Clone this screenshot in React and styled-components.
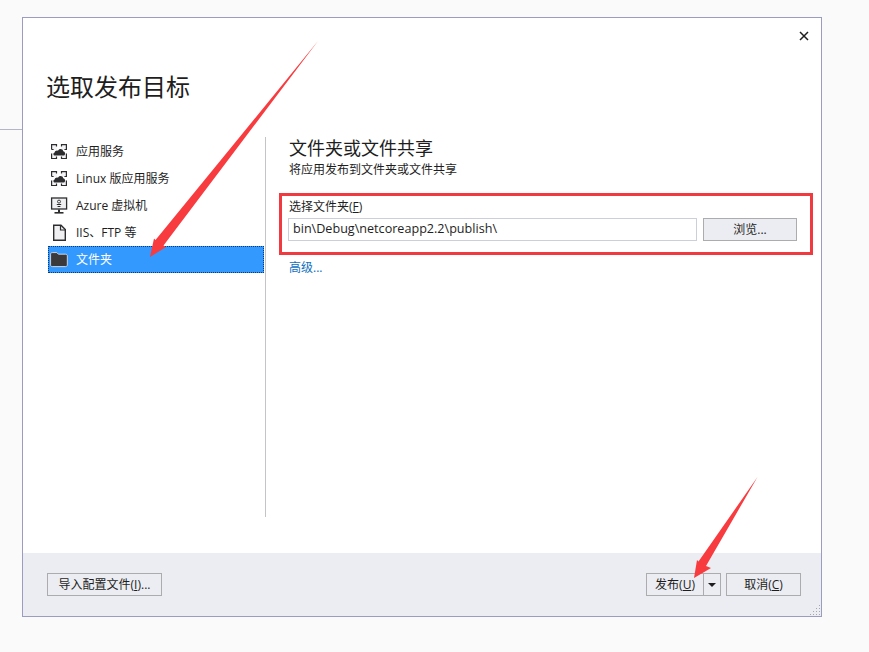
import React from "react";
import styled, { createGlobalStyle } from "styled-components";

const GlobalStyle = createGlobalStyle`
  html, body {
    margin: 0;
    padding: 0;
    background: #fafafa;
  }
  * {
    box-sizing: border-box;
  }
`;

const FONT = `"Open Sans", "Noto Sans CJK SC", sans-serif`;

const Page = styled.div`
  position: relative;
  width: 869px;
  height: 652px;
  padding: 17px 0 0 22px;
  overflow: hidden;
  font-family: ${FONT};
  font-size: 12px;
  color: #1e1e1e;
`;

const BackdropLine = styled.div`
  position: absolute;
  left: 0;
  top: 129px;
  width: 22px;
  height: 1px;
  background: #b4b5c8;
`;

const Dialog = styled.div`
  display: flex;
  flex-direction: column;
  width: 800px;
  height: 600px;
  background: #fff;
  border: 1px solid #9a9cc0;
`;

const CloseRow = styled.div`
  display: flex;
  justify-content: flex-end;
  height: 36px;
  padding: 13px 12px 0 0;
`;

const CloseButton = styled.svg`
  width: 10px;
  height: 10px;
`;

const Title = styled.h1`
  margin: 0;
  padding: 15px 0 0 23px;
  height: 83px;
  font-size: 24px;
  line-height: 36px;
  font-weight: 400;
  color: #1e1e1e;
`;

const Body = styled.div`
  display: flex;
  height: 380px;
`;

const Sidebar = styled.ul`
  display: flex;
  flex-direction: column;
  width: 243px;
  margin: 0;
  padding: 1px 0 0 25px;
  list-style: none;
  border-right: 1px solid #c4c4c8;
`;

const SideItem = styled.li`
  display: flex;
  align-items: center;
  width: 216px;
  height: 27px;
  padding-left: 2px;
  gap: 8px;
  color: ${(p) => (p.$active ? "#fff" : "#1e1e1e")};
  background: ${(p) => (p.$active ? "#3399ff" : "transparent")};
  outline: ${(p) => (p.$active ? "1px dotted #0b3a78" : "none")};
  outline-offset: -1px;
`;

const SideLabel = styled.span`
  padding-bottom: 2px;
`;

const IconSlot = styled.svg`
  flex: none;
  width: 18px;
  height: 18px;
`;

const Content = styled.div`
  flex: 1;
  padding: 0 8px 0 13px;
`;

const Heading = styled.h2`
  margin: 0;
  padding-left: 10px;
  height: 22px;
  font-size: 18px;
  line-height: 22px;
  font-weight: 400;
  color: #1e1e1e;
`;

const Subtitle = styled.div`
  padding-left: 10px;
  height: 31px;
  line-height: 16px;
  margin-top: 3px;
`;

const FolderBox = styled.div`
  height: 62px;
  padding: 3px 13px 0 7px;
  border: 3px solid #f03a3f;
  width: 534px;
`;

const FieldLabel = styled.div`
  height: 19px;
  line-height: 16px;
`;

const FieldRow = styled.div`
  display: flex;
  gap: 6px;
  margin-left: -1px;
`;

const PathInput = styled.div`
  width: 409px;
  height: 23px;
  padding-left: 4px;
  border: 1px solid #cccedb;
  font-size: 12.6px;
  line-height: 20px;
  background: #fff;
`;

const Button = styled.div`
  display: flex;
  align-items: center;
  justify-content: center;
  width: ${(p) => p.$width}px;
  height: 23px;
  padding-bottom: 1px;
  background: ${(p) => p.$fill || "transparent"};
  border: 1px solid #acacac;
  color: #1e1e1e;
  white-space: nowrap;
`;

const AdvancedLink = styled.div`
  margin: 4px 0 0 10px;
  line-height: 17px;
  color: #0e70c0;
`;

const Footer = styled.div`
  position: relative;
  display: flex;
  align-items: flex-start;
  justify-content: space-between;
  flex: 1;
  margin-top: 36px;
  padding: 20px 20px 0 24px;
  background: #ecedf2;
`;

const ButtonGroup = styled.div`
  display: flex;
`;

const SplitArrow = styled(Button)`
  margin-left: -1px;
  margin-right: 5px;
  padding-bottom: 0;
`;

const Caret = styled.div`
  width: 0;
  height: 0;
  border-left: 4px solid transparent;
  border-right: 4px solid transparent;
  border-top: 4px solid #1e1e1e;
`;

const Grip = styled.svg`
  position: absolute;
  right: 0;
  bottom: 0;
  width: 12px;
  height: 12px;
`;

const Overlay = styled.svg`
  position: absolute;
  left: 0;
  top: 0;
  width: 869px;
  height: 652px;
  pointer-events: none;
`;

const AppServiceIcon = () => (
  <IconSlot viewBox="0 0 18 18">
    <path
      d="M1 1h6v6H1zM11 1h6v6h-6zM1 10h6v6H1zM11 10h6v6h-6z"
      fill="#f4f4f6"
    />
    <path
      d="M1.6 6.5V1.6H6.5V3.5M11.5 3.5V1.6h4.9v4.9h-2M1.6 10.5v5h4.9v-2M16.4 10.5v5h-4.9v-2M1.6 6.5h2"
      fill="none"
      stroke="#2d2d30"
      strokeWidth="1.2"
    />
    <path
      d="M5 12.6c-1.8 0-2.3-2.7-.3-3.2C4.9 7.7 6.9 7 8 7.8 9 5.2 12.8 5.6 13.2 8.2c2.4.1 2.6 4.2.2 4.4z"
      fill="#2d2d30"
    />
  </IconSlot>
);

const VmIcon = () => (
  <IconSlot viewBox="0 0 18 18">
    <rect x="1.6" y="1" width="15" height="11" fill="#f0eff1" stroke="#2d2d30" strokeWidth="1.3" />
    <path d="M9 12.5v2.5" stroke="#2d2d30" strokeWidth="2" />
    <path d="M4.5 15.8h9" stroke="#2d2d30" strokeWidth="1.6" />
    <circle cx="9" cy="4.6" r="1.5" fill="none" stroke="#2d2d30" strokeWidth="0.9" />
    <path d="M6.8 7.5h4.4M7.6 9.5h2.8" stroke="#2d2d30" strokeWidth="1" />
  </IconSlot>
);

const FileIcon = () => (
  <IconSlot viewBox="0 0 18 18">
    <path
      d="M3.7 1.2h7.3l4.3 4.3v10.8H3.7z"
      fill="#f0eff1"
      stroke="#2d2d30"
      strokeWidth="1.4"
    />
    <path d="M10.5 1.2v4.8h4.8" fill="none" stroke="#2d2d30" strokeWidth="1.2" />
  </IconSlot>
);

const FolderIcon = () => (
  <IconSlot viewBox="0 0 18 18">
    <path
      d="M.6 3.2C.6 2.2 1.2 1.6 2.2 1.6h4.6l1.6 1.6h7.2c1 0 1.7.7 1.7 1.7v9c0 1-.7 1.7-1.7 1.7H2.2c-1 0-1.6-.7-1.6-1.7z"
      fill="#3a3a3d"
      stroke="#f0eff1"
      strokeWidth="0.8"
    />
  </IconSlot>
);

const items = [
  { label: "应用服务", icon: <AppServiceIcon /> },
  { label: "Linux 版应用服务", icon: <AppServiceIcon /> },
  { label: "Azure 虚拟机", icon: <VmIcon /> },
  { label: "IIS、FTP 等", icon: <FileIcon /> },
  { label: "文件夹", icon: <FolderIcon />, active: true },
];

const App = () => {
  return (
    <Page>
      <GlobalStyle />
      <BackdropLine />
      <Dialog>
        <CloseRow>
          <CloseButton viewBox="0 0 10 10">
            <path d="M1 1l8 8M9 1l-8 8" stroke="#1e1e1e" strokeWidth="1.5" />
          </CloseButton>
        </CloseRow>
        <Title>选取发布目标</Title>
        <Body>
          <Sidebar>
            {items.map((item) => (
              <SideItem key={item.label} $active={item.active}>
                {item.icon}
                <SideLabel>{item.label}</SideLabel>
              </SideItem>
            ))}
          </Sidebar>
          <Content>
            <Heading>文件夹或文件共享</Heading>
            <Subtitle>将应用发布到文件夹或文件共享</Subtitle>
            <FolderBox>
              <FieldLabel>
                选择文件夹(<u>F</u>)
              </FieldLabel>
              <FieldRow>
                <PathInput>bin\Debug\netcoreapp2.2\publish\</PathInput>
                <Button $width={94} $fill="#ecedf2">
                  浏览...
                </Button>
              </FieldRow>
            </FolderBox>
            <AdvancedLink>高级...</AdvancedLink>
          </Content>
        </Body>
        <Footer>
          <Button $width={115}>
            导入配置文件(<u>I</u>)...
          </Button>
          <ButtonGroup>
            <Button $width={58}>
              发布(<u>U</u>)
            </Button>
            <SplitArrow $width={18}>
              <Caret />
            </SplitArrow>
            <Button $width={75}>
              取消(<u>C</u>)
            </Button>
          </ButtonGroup>
          <Grip viewBox="0 0 12 12">
            <path
              d="M10 1h1v1h-1zM7 4h1v1H7zM10 4h1v1h-1zM4 7h1v1H4zM7 7h1v1H7zM10 7h1v1h-1zM1 10h1v1H1zM4 10h1v1H4zM7 10h1v1H7zM10 10h1v1h-1z"
              fill="#a6a6ad"
            />
          </Grip>
        </Footer>
      </Dialog>
      <Overlay viewBox="0 0 869 652">
        <path
          d="M318 41L163.5 245.5L166 247L150 257L154 238.5L155.5 240Z"
          fill="#f83b3e"
        />
        <path
          d="M757.5 477L706 566L711 568L694 578L697 560L698.5 561.5Z"
          fill="#f83b3e"
        />
      </Overlay>
    </Page>
  );
};

export default App;
